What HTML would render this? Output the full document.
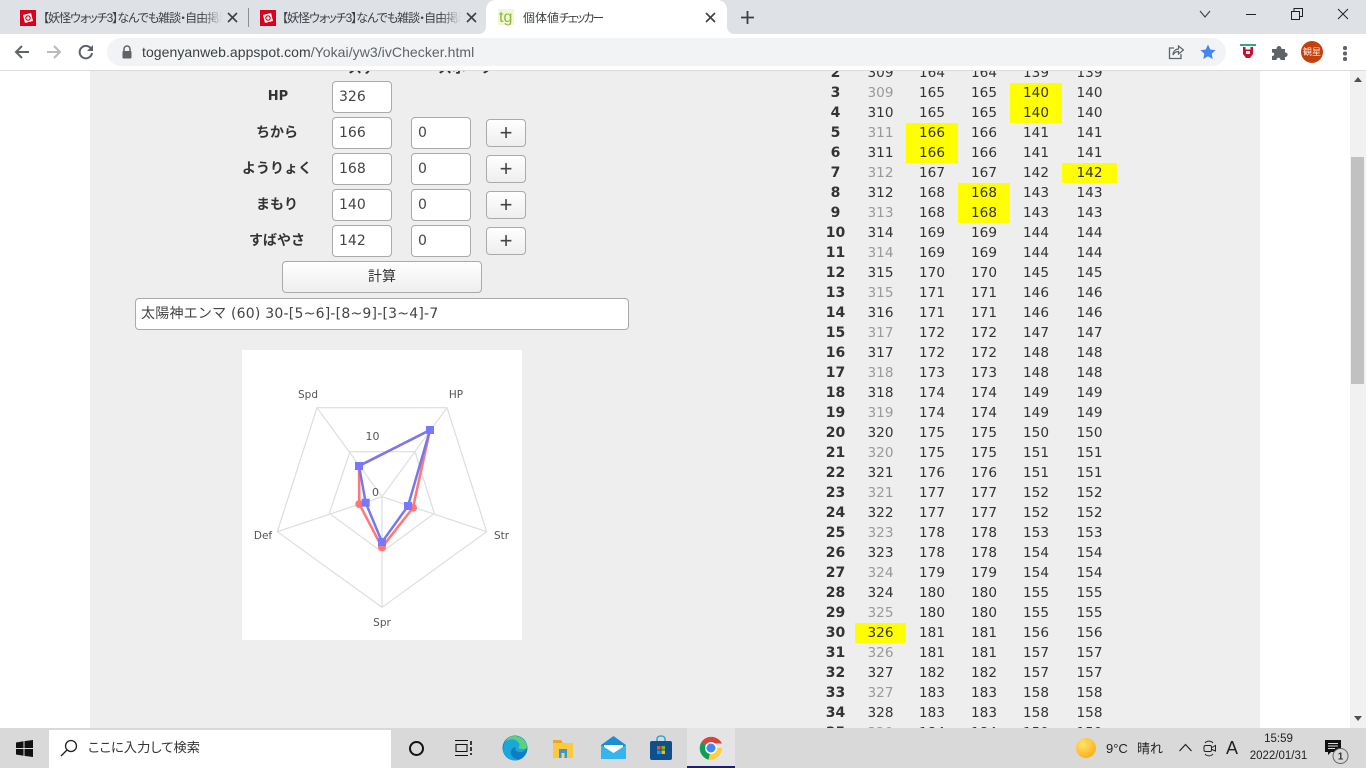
<!DOCTYPE html>
<html lang="ja"><head><meta charset="utf-8"><title>個体値チェッカー</title>
<style>
*{box-sizing:border-box}
html,body{margin:0;padding:0;width:1366px;height:768px;overflow:hidden;background:#fff;font-family:"Liberation Sans","Noto Sans CJK JP",sans-serif}
.a{position:absolute}
#strip{left:0;top:0;width:1366px;height:34px;background:#dee1e6}
#tool{left:0;top:34px;width:1366px;height:37px;background:#fff;border-bottom:1px solid #dadce0}
#omni{left:107px;top:38px;width:1119px;height:28px;border-radius:14px;background:#f1f3f4}
.tt{font-size:12px;line-height:16px;color:#3c4043;white-space:nowrap;overflow:hidden;font-feature-settings:"palt";letter-spacing:-1px;-webkit-mask-image:linear-gradient(90deg,#000 88%,transparent)}
#page{left:0;top:71px;width:1350px;height:657px;background:#fff;overflow:hidden}
#bg{left:90px;top:0;width:1170px;height:657px;background:#eee}
.in{background:#fff;border:1px solid #aaa;border-radius:4px;height:32px;width:60px;font:14px/30px "DejaVu Sans","Noto Sans CJK JP",sans-serif;color:#444;padding-left:6px}
.btn{border:1px solid #aaa;border-radius:4px;background:linear-gradient(#fff,#eee);text-align:center;color:#333}
.pl{font:22px/25px "Liberation Sans",sans-serif;color:#444}
.lb{width:90px;left:232px;text-align:center;font:bold 14px/20px "DejaVu Sans","Noto Sans CJK JP",sans-serif;color:#333}
#t{position:absolute;left:816px;top:-8px;border-collapse:collapse;table-layout:fixed;width:301px;font:13.600px/20px "DejaVu Sans",sans-serif;color:#333}
#t td{padding:0;height:20px;text-align:center}
#t td:first-child{font-weight:bold;font-size:14px}
#t .g{color:#999}
#t .y{background:#ff0}
#task{left:0;top:728px;width:1366px;height:40px;background:#d9d9d9}
.tb{font-family:"Liberation Sans","Noto Sans CJK JP",sans-serif;color:#222;white-space:nowrap}
</style></head><body>
<div class="a" id="strip"></div>
<svg class="a" style="left:476px;top:0" width="262" height="35"><path d="M2 34C7 34 10 31 10 26V10C10 4 14 0 20 0H241C247 0 251 4 251 10V26C251 31 254 34 259 34Z" fill="#fff"/></svg>
<div class="a" style="left:20px;top:10px;width:16px;height:16px;background:#d8001c"></div>
<svg class="a" style="left:22px;top:12px" width="12" height="12"><path d="M1 3L9 1L11 9L3 11Z" fill="#fff"/><circle cx="6" cy="6" r="2.200" fill="none" stroke="#d8001c" stroke-width="1.200"/></svg>
<div class="a tt" style="left:43px;top:10px;width:180px">【妖怪ウォッチ3】なんでも雑談・自由掲示板</div>
<svg class="a" style="left:227px;top:12px" width="11" height="11"><path d="M1 1L10 10M10 1L1 10" stroke="#3c4043" stroke-width="1.600"/></svg>
<div class="a" style="left:248px;top:8px;width:1px;height:19px;background:#8c8f94"></div>
<div class="a" style="left:260px;top:10px;width:16px;height:16px;background:#d8001c"></div>
<svg class="a" style="left:262px;top:12px" width="12" height="12"><path d="M1 3L9 1L11 9L3 11Z" fill="#fff"/><circle cx="6" cy="6" r="2.200" fill="none" stroke="#d8001c" stroke-width="1.200"/></svg>
<div class="a tt" style="left:282px;top:10px;width:180px">【妖怪ウォッチ3】なんでも雑談・自由掲示板</div>
<svg class="a" style="left:466px;top:12px" width="11" height="11"><path d="M1 1L10 10M10 1L1 10" stroke="#3c4043" stroke-width="1.600"/></svg>
<div class="a" style="left:498px;top:9px;width:16px;height:16px;background:#f1f6d6"></div>
<div class="a" style="left:499px;top:9px;font:16px/18px 'Liberation Sans',sans-serif;color:#8cb83a">tg</div>
<div class="a" style="left:523px;top:10px;font-size:12px;line-height:16px;color:#3c4043;white-space:nowrap;font-feature-settings:'palt'">個体値<span style="letter-spacing:-2px">チェッカー</span></div>
<svg class="a" style="left:705px;top:12px" width="11" height="11"><path d="M1 1L10 10M10 1L1 10" stroke="#3c4043" stroke-width="1.600"/></svg>
<svg class="a" style="left:741px;top:11px" width="13" height="13"><path d="M6.500 0V13M0 6.500H13" stroke="#3c4043" stroke-width="1.800"/></svg>
<svg class="a" style="left:1199px;top:8px" width="12" height="12"><path d="M1 3L6 9L11 3" fill="none" stroke="#3c4043" stroke-width="1.100"/></svg>
<div class="a" style="left:1246px;top:14px;width:10px;height:1px;background:#222"></div>
<svg class="a" style="left:1291px;top:8px" width="12" height="12"><path d="M.5 3.500H8.500V11.500H.5ZM3 3.500V.5H11.500V8.500H8.500" fill="none" stroke="#222" stroke-width="1"/></svg>
<svg class="a" style="left:1337px;top:8px" width="12" height="12"><path d="M1 1L11 11M11 1L1 11" stroke="#222" stroke-width="1"/></svg>

<div class="a" id="tool"></div>
<svg class="a" style="left:14px;top:44px" width="16" height="16"><path d="M15 8H2M8 2L2 8L8 14" fill="none" stroke="#5f6368" stroke-width="2"/></svg>
<svg class="a" style="left:46px;top:44px" width="16" height="16"><path d="M1 8H14M8 2L14 8L8 14" fill="none" stroke="#b8babd" stroke-width="2"/></svg>
<svg class="a" style="left:78px;top:44px" width="16" height="16"><path d="M13.500 5.500A6.200 6.200 0 1 0 14 9" fill="none" stroke="#5f6368" stroke-width="2"/><path d="M15 1V7H9Z" fill="#5f6368"/></svg>
<div class="a" id="omni"></div>
<svg class="a" style="left:121px;top:45px" width="12" height="14"><path d="M3 6V4A3 3 0 0 1 9 4V6" fill="none" stroke="#5f6368" stroke-width="1.500"/><rect x="1.500" y="6" width="9" height="7.500" rx="1" fill="#5f6368"/></svg>
<div class="a" style="left:142px;top:44px;font-size:14px;line-height:17px;color:#3c4043;white-space:nowrap;letter-spacing:.06px">togenyanweb.appspot.com<span style="color:#5f6368">/Yokai/yw3/ivChecker.html</span></div>
<svg class="a" style="left:1168px;top:44px" width="16" height="16"><path d="M13 10V14.500H1.500V4H6" fill="none" stroke="#5f6368" stroke-width="1.300"/><path d="M5 11C5 7 8 5 10.500 5V2L15.500 6L10.500 10V7.500C8 7.500 6 9 5 11Z" fill="none" stroke="#5f6368" stroke-width="1.200"/></svg>
<svg class="a" style="left:1200px;top:44px" width="16" height="16"><path d="M8 .5L10.300 5.500L15.500 6.100L11.700 9.700L12.700 15L8 12.300L3.300 15L4.300 9.700L.5 6.100L5.700 5.500Z" fill="#4285f4"/></svg>
<div class="a" style="left:1240px;top:44px;width:16px;height:2px;background:#3aa57a"></div>
<svg class="a" style="left:1243px;top:47px" width="10" height="11"><path d="M0 0H2.500V2.500H7.500V0H10V7L7 11H3L0 7Z" fill="#c8102e"/><rect x="3" y="4" width="4" height="3" fill="#fff"/></svg>
<svg class="a" style="left:1272px;top:45px" width="16" height="15"><path d="M0 4H4.500C4.500 0 9.500 0 9.500 4H13V7.500C16.500 7.500 16.500 12 13 12V15H8.500C8.500 12 4.500 12 4.500 15H0V11C3 11 3 7.500 0 7.500Z" fill="#5f6368"/></svg>
<div class="a" style="left:1301px;top:41px;width:22px;height:22px;border-radius:50%;background:#c2410c;color:#fde8dc;font-size:9px;line-height:22px;text-align:center;white-space:nowrap">観星</div>
<div class="a" style="left:1343px;top:46px;width:3.500px;height:3.500px;border-radius:50%;background:#5f6368;box-shadow:0 5.500px 0 #5f6368,0 11px 0 #5f6368"></div>

<div class="a" id="page">
<div class="a" id="bg"></div>
<div class="a" style="left:348px;top:-13px;font:bold 14px/20px 'Noto Sans CJK JP',sans-serif;color:#333">ステ</div>
<div class="a" style="left:438px;top:-13px;font:bold 14px/20px 'Noto Sans CJK JP',sans-serif;color:#333">スポーツ</div>
<div class="a lb" style="top:15px;font-size:13px;padding-left:2px;line-height:21px">HP</div>
<div class="a lb" style="top:52px">ちから</div>
<div class="a lb" style="top:88px">ようりょく</div>
<div class="a lb" style="top:124px">まもり</div>
<div class="a lb" style="top:160px">すばやさ</div>
<div class="a in" style="left:332px;top:10px">326</div>
<div class="a in" style="left:332px;top:46px">166</div>
<div class="a in" style="left:332px;top:82px">168</div>
<div class="a in" style="left:332px;top:118px">140</div>
<div class="a in" style="left:332px;top:154px">142</div>
<div class="a in" style="left:411px;top:46px">0</div>
<div class="a in" style="left:411px;top:82px">0</div>
<div class="a in" style="left:411px;top:118px">0</div>
<div class="a in" style="left:411px;top:154px">0</div>
<div class="a btn pl" style="left:486px;top:48px;width:40px;height:28px">+</div>
<div class="a btn pl" style="left:486px;top:84px;width:40px;height:28px">+</div>
<div class="a btn pl" style="left:486px;top:120px;width:40px;height:28px">+</div>
<div class="a btn pl" style="left:486px;top:156px;width:40px;height:28px">+</div>
<div class="a btn" style="left:282px;top:190px;width:200px;height:32px;font:14px/29px 'Noto Sans CJK JP',sans-serif">計算</div>
<div class="a in" style="left:135px;top:227px;width:494px;padding-left:5px;letter-spacing:.22px">太陽神エンマ (60) 30-[5~6]-[8~9]-[3~4]-7</div>

<svg class="a" style="left:242px;top:279px" width="280" height="290" viewBox="242 350 280 290">
<rect x="242" y="350" width="280" height="290" fill="#fff"/>
<g fill="none" stroke="#ddd" stroke-width="1.200">
<path d="M447 407.700L486.700 531.700L382 607.300L277.300 531.700L317 407.700Z"/>
<path d="M415 451.700L434.300 513.300L382 552L329.300 513.300L350 451.700Z"/>
<path d="M382 496.700L447 407.700M382 496.700L486.700 531.700M382 496.700V607.300M382 496.700L277.300 531.700M382 496.700L317 407.700"/>
</g>
<path d="M430 430L413 507.700L382 547.300L359.300 504L359 466Z" fill="none" stroke="#f77" stroke-width="2.500"/>
<g fill="#f77"><circle cx="430" cy="430" r="4"/><circle cx="413" cy="507.700" r="4"/><circle cx="382" cy="547.300" r="4"/><circle cx="359.300" cy="504" r="4"/><circle cx="359" cy="466" r="4"/></g>
<path d="M430 430L408 506L382 542L365.700 502.700L359 466Z" fill="none" stroke="#77e" stroke-width="2.500"/>
<g fill="#77f"><rect x="426" y="426" width="8" height="8"/><rect x="404" y="502" width="8" height="8"/><rect x="378" y="538" width="8" height="8"/><rect x="361.700" y="498.700" width="8" height="8"/><rect x="355" y="462" width="8" height="8"/></g>
<g font-family="DejaVu Sans,sans-serif" font-size="10.500" fill="#555" text-anchor="middle">
<text x="456" y="398">HP</text><text x="501.500" y="539">Str</text><text x="382" y="626">Spr</text><text x="263" y="539">Def</text><text x="308" y="398">Spd</text>
<text x="372.500" y="440" font-size="11">10</text><text x="375.500" y="496" font-size="11">0</text>
</g>
</svg>

<table id="t"><colgroup><col style="width:39px"><col style="width:51px"><col style="width:52px"><col style="width:52px"><col style="width:52px"><col style="width:55px"></colgroup>
<tr><td>2</td><td>309</td><td>164</td><td>164</td><td>139</td><td>139</td></tr>
<tr><td>3</td><td class="g">309</td><td>165</td><td>165</td><td class="y">140</td><td>140</td></tr>
<tr><td>4</td><td>310</td><td>165</td><td>165</td><td class="y">140</td><td>140</td></tr>
<tr><td>5</td><td class="g">311</td><td class="y">166</td><td>166</td><td>141</td><td>141</td></tr>
<tr><td>6</td><td>311</td><td class="y">166</td><td>166</td><td>141</td><td>141</td></tr>
<tr><td>7</td><td class="g">312</td><td>167</td><td>167</td><td>142</td><td class="y">142</td></tr>
<tr><td>8</td><td>312</td><td>168</td><td class="y">168</td><td>143</td><td>143</td></tr>
<tr><td>9</td><td class="g">313</td><td>168</td><td class="y">168</td><td>143</td><td>143</td></tr>
<tr><td>10</td><td>314</td><td>169</td><td>169</td><td>144</td><td>144</td></tr>
<tr><td>11</td><td class="g">314</td><td>169</td><td>169</td><td>144</td><td>144</td></tr>
<tr><td>12</td><td>315</td><td>170</td><td>170</td><td>145</td><td>145</td></tr>
<tr><td>13</td><td class="g">315</td><td>171</td><td>171</td><td>146</td><td>146</td></tr>
<tr><td>14</td><td>316</td><td>171</td><td>171</td><td>146</td><td>146</td></tr>
<tr><td>15</td><td class="g">317</td><td>172</td><td>172</td><td>147</td><td>147</td></tr>
<tr><td>16</td><td>317</td><td>172</td><td>172</td><td>148</td><td>148</td></tr>
<tr><td>17</td><td class="g">318</td><td>173</td><td>173</td><td>148</td><td>148</td></tr>
<tr><td>18</td><td>318</td><td>174</td><td>174</td><td>149</td><td>149</td></tr>
<tr><td>19</td><td class="g">319</td><td>174</td><td>174</td><td>149</td><td>149</td></tr>
<tr><td>20</td><td>320</td><td>175</td><td>175</td><td>150</td><td>150</td></tr>
<tr><td>21</td><td class="g">320</td><td>175</td><td>175</td><td>151</td><td>151</td></tr>
<tr><td>22</td><td>321</td><td>176</td><td>176</td><td>151</td><td>151</td></tr>
<tr><td>23</td><td class="g">321</td><td>177</td><td>177</td><td>152</td><td>152</td></tr>
<tr><td>24</td><td>322</td><td>177</td><td>177</td><td>152</td><td>152</td></tr>
<tr><td>25</td><td class="g">323</td><td>178</td><td>178</td><td>153</td><td>153</td></tr>
<tr><td>26</td><td>323</td><td>178</td><td>178</td><td>154</td><td>154</td></tr>
<tr><td>27</td><td class="g">324</td><td>179</td><td>179</td><td>154</td><td>154</td></tr>
<tr><td>28</td><td>324</td><td>180</td><td>180</td><td>155</td><td>155</td></tr>
<tr><td>29</td><td class="g">325</td><td>180</td><td>180</td><td>155</td><td>155</td></tr>
<tr><td>30</td><td class="y">326</td><td>181</td><td>181</td><td>156</td><td>156</td></tr>
<tr><td>31</td><td class="g">326</td><td>181</td><td>181</td><td>157</td><td>157</td></tr>
<tr><td>32</td><td>327</td><td>182</td><td>182</td><td>157</td><td>157</td></tr>
<tr><td>33</td><td class="g">327</td><td>183</td><td>183</td><td>158</td><td>158</td></tr>
<tr><td>34</td><td>328</td><td>183</td><td>183</td><td>158</td><td>158</td></tr>
<tr><td>35</td><td class="g">329</td><td>184</td><td>184</td><td>159</td><td>159</td></tr>
</table>
</div>

<div class="a" style="left:1350px;top:71px;width:16px;height:657px;background:#f1f1f1"></div>
<div class="a" style="left:1351px;top:157px;width:13px;height:227px;background:#c1c1c1"></div>
<svg class="a" style="left:1354px;top:77px" width="8" height="5"><path d="M4 0L8 5H0Z" fill="#505050"/></svg>
<svg class="a" style="left:1354px;top:716px" width="8" height="5"><path d="M0 0H8L4 5Z" fill="#505050"/></svg>

<div class="a" id="task"></div>
<svg class="a" style="left:16px;top:740px" width="17" height="17"><path d="M0 2.500L7.500 1.300V8H0ZM8.500 1.100L17 0V8H8.500ZM0 9H7.500V15.700L0 14.500ZM8.500 9H17V17L8.500 15.900Z" fill="#111"/></svg>
<div class="a" style="left:49px;top:730px;width:342px;height:38px;background:#fff"></div>
<svg class="a" style="left:60px;top:739px" width="18" height="18"><circle cx="11" cy="7" r="5.500" fill="none" stroke="#222" stroke-width="1.300"/><path d="M7 11L1 17" stroke="#222" stroke-width="1.300"/></svg>
<div class="a tb" style="left:88px;top:738px;font-size:13.300px;line-height:20px;color:#333;font-feature-settings:'palt'">ここに入力して検索</div>
<div class="a" style="left:409px;top:741px;width:15px;height:15px;border:2.500px solid #111;border-radius:50%"></div>
<svg class="a" style="left:455px;top:740px" width="18" height="16"><path d="M0 .5H13M0 15.500H13M1 4.500H12V11.500H1Z" fill="none" stroke="#111" stroke-width="1.100"/><path d="M16 1V5M16 7V11M16 13V15" stroke="#111" stroke-width="1.600"/></svg>
<svg class="a" style="left:502px;top:735px" width="26" height="26"><circle cx="13" cy="13" r="12.500" fill="#0c7fc4"/><path d="M2 9C5 1 16 -1 22 5C26 9 25 16 20 17C14 18 12 14 14 12C10 12 7 17 10 21C12 24 16 25 18 24.500C12 27 3 24 1 15Z" fill="#1aa7d9"/><path d="M25 12C25 6 19 1 13 1C8 1 5 3 3 7C6 4 13 3 16 7C18 9 18 11 16 13C19 14 25 15 25 12Z" fill="#5bd07e"/></svg>
<svg class="a" style="left:553px;top:738px" width="20" height="20"><path d="M0 2H8L10 5H0Z" fill="#e9a824"/><rect x="0" y="5" width="20" height="15" fill="#fbc93d"/><rect x="6" y="11" width="8" height="9" fill="#3a96d6"/><rect x="8.500" y="15" width="3" height="5" fill="#fbd76a"/></svg>
<svg class="a" style="left:601px;top:736px" width="25" height="23"><path d="M0 9L12.500 0L25 9V23H0Z" fill="#1b8fd6"/><path d="M3 9H22V16L12.500 20L3 16Z" fill="#fff"/><path d="M0 9L12.500 17L25 9V23H0Z" fill="#36b4ee"/></svg>
<svg class="a" style="left:650px;top:735px" width="22" height="25"><path d="M7 7V4C7 0 15 0 15 4V7" fill="none" stroke="#2aa5d8" stroke-width="1.500"/><rect x="0" y="6" width="22" height="19" rx="2" fill="#0f4f8c"/><rect x="7" y="11" width="3.500" height="3.500" fill="#f25022"/><rect x="11.500" y="11" width="3.500" height="3.500" fill="#7fba00"/><rect x="7" y="15.500" width="3.500" height="3.500" fill="#00a4ef"/><rect x="11.500" y="15.500" width="3.500" height="3.500" fill="#ffb900"/></svg>
<div class="a" style="left:687px;top:728px;width:48px;height:40px;background:#e4e4e4"></div>
<div class="a" style="left:687px;top:766px;width:48px;height:2px;background:#1f1a80"></div>
<svg class="a" style="left:699px;top:736px" width="24" height="24" viewBox="0 0 24 24"><path d="M12 12L2.400 6A12 12 0 0 1 23 7.500H12Z" fill="#db4437"/><path d="M12 12L2.400 6A12 12 0 0 0 9.500 23.700L15 14Z" fill="#0f9d58"/><path d="M12 12H23A12 12 0 0 1 9.500 23.700Z" fill="#ffcd40"/><circle cx="12" cy="12" r="6" fill="#fff"/><circle cx="12" cy="12" r="4.500" fill="#4285f4"/></svg>

<div class="a" style="left:1076px;top:738px;width:20px;height:20px;border-radius:50%;background:radial-gradient(circle at 35% 30%,#ffe26a,#ffb31a 75%)"></div>
<div class="a tb" style="left:1106px;top:740px;font-size:13px;line-height:18px">9°C</div>
<div class="a tb" style="left:1137px;top:740px;font-size:13px;line-height:18px">晴れ</div>
<svg class="a" style="left:1179px;top:743px" width="13" height="9"><path d="M.5 8L6.500 1.500L12.500 8" fill="none" stroke="#222" stroke-width="1.200"/></svg>
<svg class="a" style="left:1203px;top:740px" width="13" height="17"><path d="M2 3C4 .5 8 .5 10 3M2 14C4 16.500 8 16.500 10 14" fill="none" stroke="#222"/><rect x="1" y="5.500" width="7.500" height="6" rx="1.500" fill="none" stroke="#222"/><path d="M9 7.500L12.500 5.500V11L9 9.500" fill="none" stroke="#222"/></svg>
<div class="a tb" style="left:1226px;top:736px;font-size:18px;line-height:24px">A</div>
<div class="a tb" style="left:1250px;top:732px;width:57px;text-align:center;font-size:11.500px;line-height:15px">15:59</div>
<div class="a tb" style="left:1248px;top:749px;width:61px;text-align:center;font-size:11.500px;line-height:15px">2022/01/31</div>
<svg class="a" style="left:1325px;top:740px" width="24" height="24"><path d="M0 0H16V12H6L3 15V12H0Z" fill="#111"/><path d="M3 3.500H13M3 6H13M3 8.500H10" stroke="#ddd" stroke-width=".9"/><circle cx="15.500" cy="16" r="7.500" fill="#d9d9d9" stroke="#666" stroke-width="1"/><text x="15.500" y="19.500" font-size="10" font-family="Liberation Sans,sans-serif" font-weight="bold" text-anchor="middle" fill="#333">1</text></svg>
</body></html>
